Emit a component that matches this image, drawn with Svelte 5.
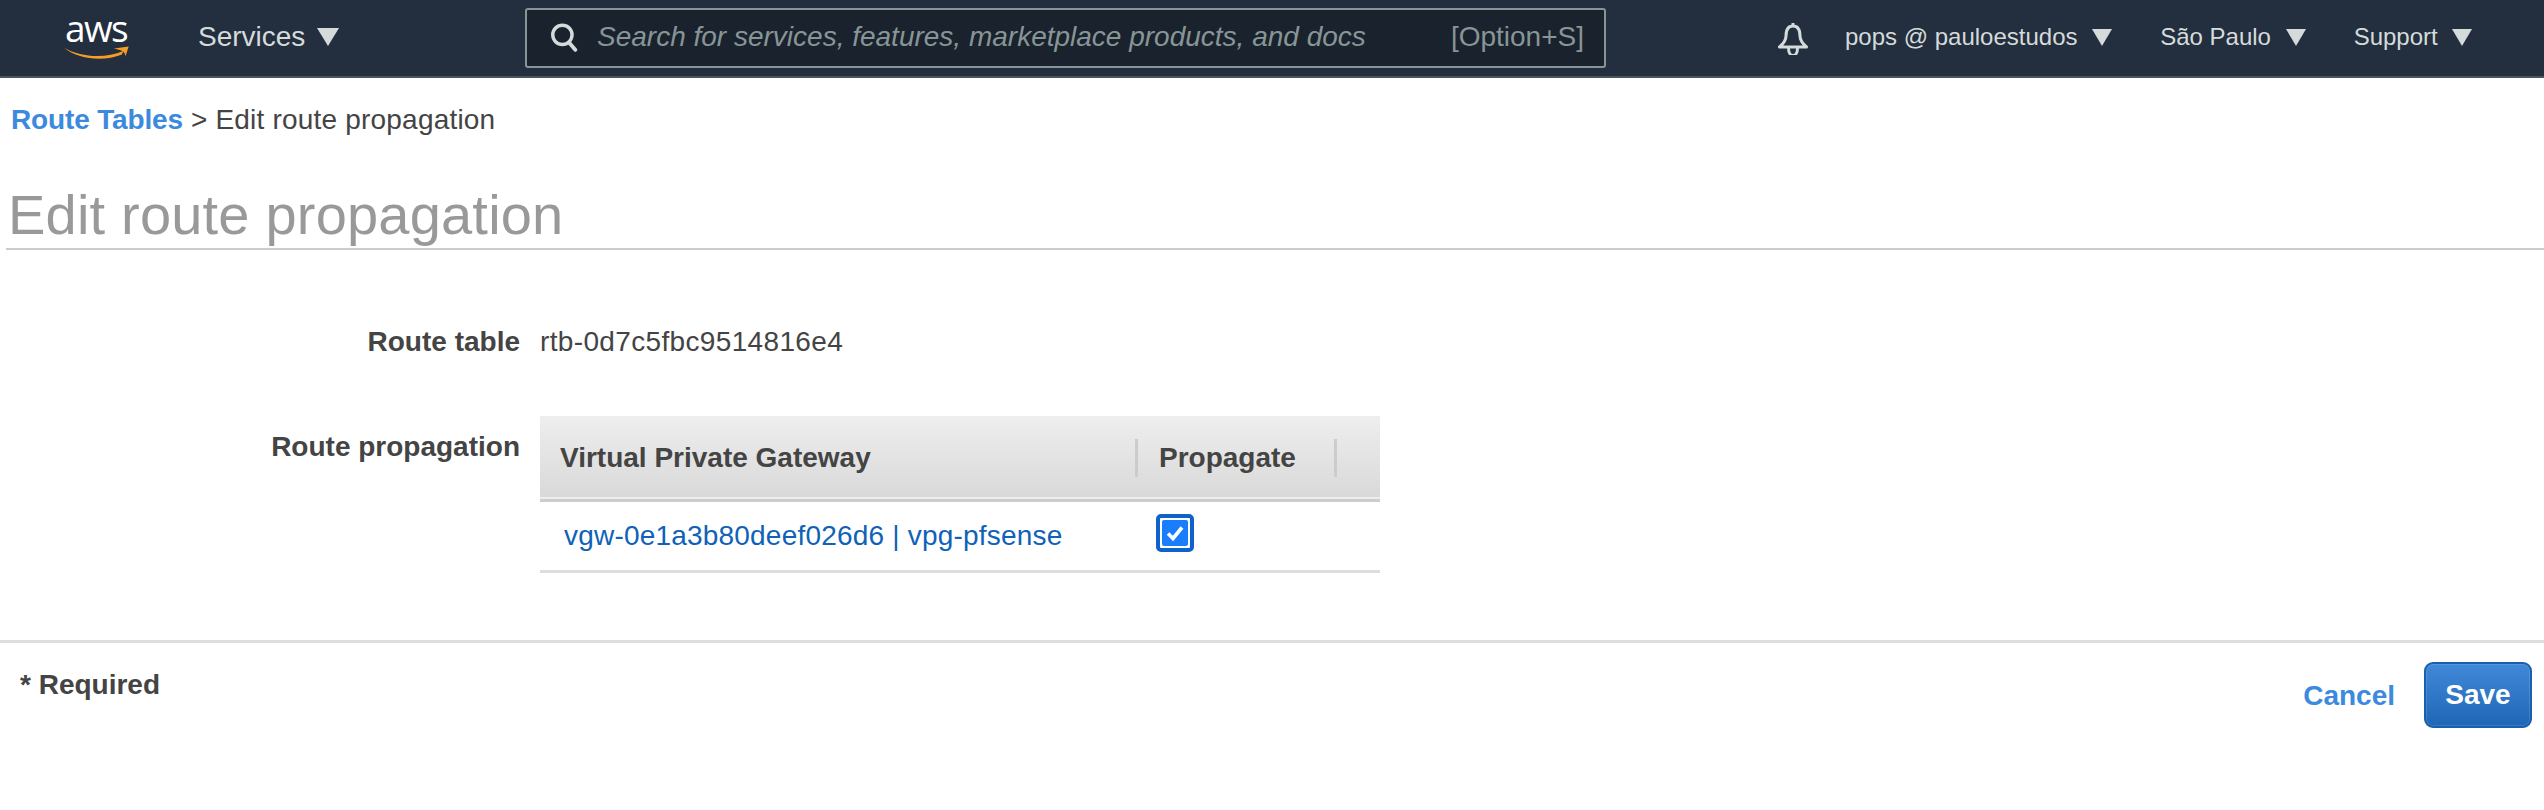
<script>
  let propagate = true;
</script>

<div class="page">
  <header class="nav">
    <div class="logo">
      <span class="logo-text">aws</span>
      <svg class="smile" viewBox="0 0 50 16" width="67" height="16" preserveAspectRatio="none">
        <path d="M1 3 C 13 12, 31 14, 45 6 L 44 9.5 C 31 16.5, 12 15, 1 3 Z" fill="#f79c27" />
        <path d="M38 3.5 L49 1.5 L46.5 12 C 47 8 45 5 38 3.5 Z" fill="#f79c27" />
      </svg>
    </div>
    <div class="nav-item services">Services <span class="caret"></span></div>
    <div class="search">
      <svg class="search-icon" viewBox="0 0 28 28" width="30" height="30">
        <circle cx="12.5" cy="12" r="9" fill="none" stroke="#d5dbdb" stroke-width="3.2" />
        <path d="M18.5 19 L24.5 26" stroke="#d5dbdb" stroke-width="3.6" stroke-linecap="round" />
      </svg>
      <span class="placeholder">Search for services, features, marketplace products, and docs</span>
      <span class="shortcut">[Option+S]</span>
    </div>
    <svg class="bell" viewBox="0 0 32 34" width="32" height="34">
      <path d="M16 2 V5 M16 5 C10 5 9 10 9 15 C9 20 6 23 2.5 26 H29.5 C26 23 23 20 23 15 C23 10 22 5 16 5 Z" fill="none" stroke="#d5dbdb" stroke-width="3" stroke-linejoin="round" />
      <path d="M11.5 27 C11.5 37 20.5 37 20.5 27" fill="none" stroke="#d5dbdb" stroke-width="3" />
    </svg>
    <div class="nav-item small user">pops @ pauloestudos <span class="caret"></span></div>
    <div class="nav-item small region">São Paulo <span class="caret"></span></div>
    <div class="nav-item small support">Support <span class="caret"></span></div>
  </header>

  <nav class="crumbs"><a href="#top">Route Tables</a> &gt; Edit route propagation</nav>

  <h1>Edit route propagation</h1>

  <section class="form">
    <div class="field first">
      <div class="label">Route table</div>
      <div class="value">rtb-0d7c5fbc9514816e4</div>
    </div>
    <div class="field second">
      <div class="label">Route propagation</div>
      <table>
        <thead>
          <tr>
            <th class="col-gw">Virtual Private Gateway</th>
            <th class="col-prop"><span>Propagate</span></th>
            <th class="col-end"></th>
          </tr>
        </thead>
        <tbody>
          <tr>
            <td class="gw"><a href="#top">vgw-0e1a3b80deef026d6 | vpg-pfsense</a></td>
            <td class="check">
              <label class="box" class:on={propagate}>
                <input type="checkbox" bind:checked={propagate} />
                <svg viewBox="0 0 26 26" width="26" height="26">
                  <rect width="26" height="26" rx="2" fill="#1a7dfb" />
                  <path d="M6 13.5 L11 18.5 L20 7.5" fill="none" stroke="#fff" stroke-width="3.6" />
                </svg>
              </label>
            </td>
            <td></td>
          </tr>
        </tbody>
      </table>
    </div>
  </section>

  <footer>
    <div class="required">* Required</div>
    <div class="actions">
      <a class="cancel" href="#top">Cancel</a>
      <button class="save">Save</button>
    </div>
  </footer>
</div>

<style>
  :global(body) {
    margin: 0;
    background: #fff;
  }
  .page {
    font-family: "Liberation Sans", Arial, sans-serif;
    color: #444;
    height: 810px;
    overflow: hidden;
  }
  a {
    text-decoration: none;
  }

  .nav {
    height: 76px;
    background: #232f3e;
    border-bottom: 2px solid #4a5560;
    display: flex;
    align-items: center;
    color: #d5dbdb;
  }
  .logo {
    width: 68px;
    margin-left: 62px;
    height: 60px;
    display: flex;
    flex-direction: column;
    align-items: center;
  }
  .logo-text {
    font-family: "Open Sans", sans-serif;
    font-size: 37px;
    line-height: 36px;
    color: #fff;
    margin-top: 2px;
    letter-spacing: -1.6px;
  }
  .smile {
    margin-top: -1px;
    flex: none;
  }
  .nav-item {
    font-size: 28px;
    display: flex;
    align-items: center;
    white-space: pre;
    padding-bottom: 2px;
  }
  .nav-item.small {
    font-size: 24px;
  }
  .services {
    margin-left: 68px;
    width: 327px;
  }
  .caret {
    width: 0;
    height: 0;
    border-left: 11px solid transparent;
    border-right: 11px solid transparent;
    border-top: 18px solid #d5dbdb;
    margin-left: 4px;
  }
  .small .caret {
    border-left-width: 10px;
    border-right-width: 10px;
    border-top-width: 17px;
    margin-left: 8px;
  }
  .search {
    box-sizing: border-box;
    width: 1081px;
    height: 60px;
    background: #1a222d;
    border: 2px solid #879596;
    border-radius: 3px;
    display: flex;
    align-items: center;
    padding: 0 20px 2px 22px;
  }
  .search-icon {
    flex: none;
  }
  .placeholder {
    font-style: italic;
    font-size: 28px;
    color: #879596;
    margin-left: 18px;
    flex: 1;
  }
  .shortcut {
    font-size: 28px;
    color: #879596;
  }
  .bell {
    margin-left: 171px;
  }
  .user {
    margin-left: 36px;
  }
  .region {
    margin-left: 48px;
  }
  .support {
    margin-left: 48px;
  }

  .crumbs {
    font-size: 28px;
    line-height: 30px;
    padding: 27px 0 0 11px;
    color: #444;
    letter-spacing: 0.2px;
  }
  .crumbs a {
    color: #3b8ade;
    font-weight: 700;
    letter-spacing: -0.15px;
  }
  h1 {
    margin: 35px 0 0 6px;
    padding: 0 0 0 2px;
    font-size: 56px;
    letter-spacing: 0.2px;
    line-height: 90px;
    height: 78px;
    font-weight: 400;
    color: #999;
    border-bottom: 2px solid #ccc;
  }

  .form {
    height: 393px;
    border-bottom: 3px solid #ddd;
    box-sizing: border-box;
  }
  .field {
    display: flex;
    align-items: flex-start;
    gap: 20px;
    font-size: 28px;
  }
  .first {
    padding-top: 77px;
  }
  .second {
    padding-top: 59px;
  }
  .label {
    width: 520px;
    text-align: right;
    font-weight: 700;
    line-height: 30px;
    color: #444;
  }
  .second .label {
    padding-top: 16px;
  }
  .value {
    line-height: 30px;
    letter-spacing: 0.35px;
  }

  table {
    width: 840px;
    border-collapse: collapse;
    table-layout: fixed;
  }
  thead tr {
    background: linear-gradient(#eeeeee, #d9d9d9);
    height: 84px;
    border-bottom: 3px solid #ccc;
  }
  th {
    text-align: left;
    font-size: 28px;
    padding: 2px 0 0;
    color: #444;
  }
  .col-gw {
    width: 595px;
    padding-left: 20px;
    box-sizing: border-box;
  }
  .col-prop {
    width: 202px;
  }
  .col-prop span {
    display: block;
    border-left: 3px solid #ccc;
    border-right: 3px solid #ccc;
    padding-left: 21px;
    line-height: 38px;
    height: 38px;
  }
  tbody tr {
    height: 71px;
    border-bottom: 3px solid #ddd;
  }
  td {
    padding: 0;
  }
  .gw {
    padding-left: 24px;
  }
  .gw a {
    color: #0f62b8;
    letter-spacing: 0.2px;
  }
  .check {
    padding-left: 21px;
    padding-bottom: 6px;
  }
  .box {
    display: block;
    box-sizing: border-box;
    width: 38px;
    height: 38px;
    border: 4px solid #0f62c9;
    border-radius: 5px;
    padding: 2px;
    position: relative;
  }
  .box input {
    position: absolute;
    opacity: 0;
    margin: 0;
  }
  .box svg {
    display: block;
    visibility: hidden;
  }
  .box.on svg {
    visibility: visible;
  }

  footer {
    display: flex;
    justify-content: space-between;
    align-items: flex-start;
    padding: 19px 12px 0 20px;
  }
  .required {
    font-size: 28px;
    font-weight: 700;
    line-height: 30px;
    padding-top: 8px;
  }
  .actions {
    display: flex;
    align-items: center;
    gap: 29px;
    font-size: 28px;
    font-weight: 700;
  }
  .cancel {
    color: #3b8ade;
    padding-top: 2px;
  }
  .save {
    width: 108px;
    height: 66px;
    border: 2px solid #1a5fae;
    border-radius: 9px;
    background: linear-gradient(#4189d8, #1f66b7);
    box-shadow: inset 0 0 0 1px rgba(255, 255, 255, 0.12);
    color: #fff;
    font: inherit;
    padding: 0;
  }
</style>
